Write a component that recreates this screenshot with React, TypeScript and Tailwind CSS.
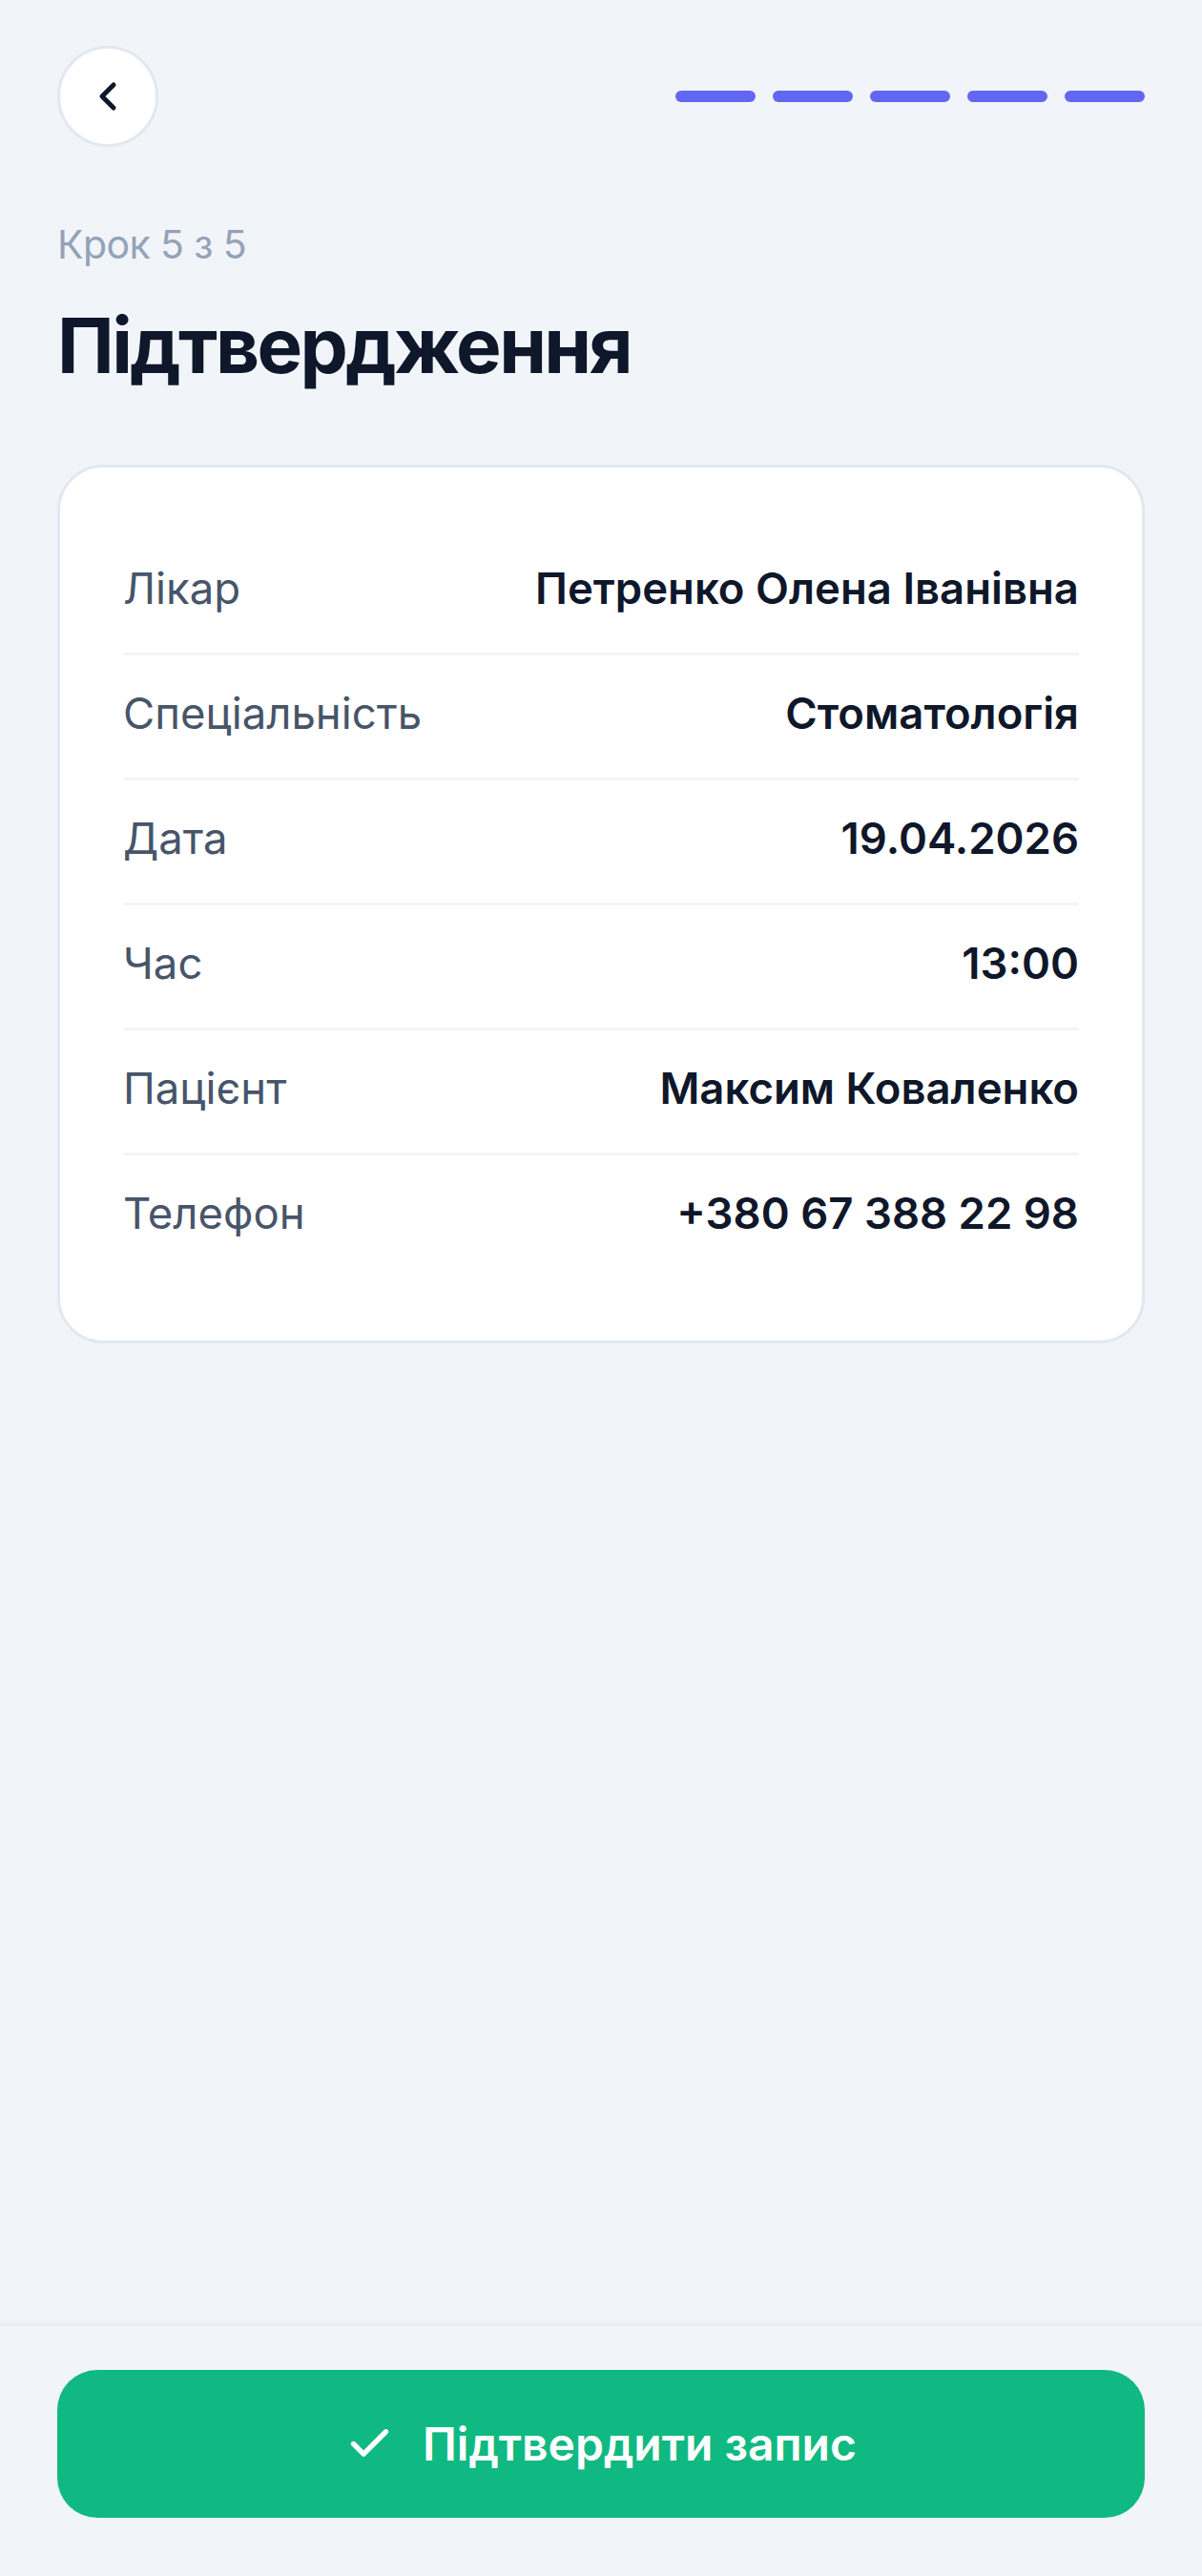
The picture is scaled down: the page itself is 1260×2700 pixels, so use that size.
import React from "react";

const rows: { label: string; value: string }[] = [
  { label: "Лікар", value: "Петренко Олена Іванівна" },
  { label: "Спеціальність", value: "Стоматологія" },
  { label: "Дата", value: "19.04.2026" },
  { label: "Час", value: "13:00" },
  { label: "Пацієнт", value: "Максим Коваленко" },
  { label: "Телефон", value: "+380 67 388 22 98" },
];

export default function App() {
  return (
    <div
      className="w-full h-[2700px] bg-[#f1f5f9] flex flex-col"
      style={{ fontFamily: "Inter, 'Noto Sans', sans-serif" }}
    >
      <main className="flex-1 px-[60px] pt-[48px]">
        <div className="flex items-center justify-between h-[106px]">
          <button className="w-[106px] h-[106px] rounded-full border-[3px] border-[#e2e8f0] bg-white flex items-center justify-center">
            <svg
              width="48"
              height="48"
              viewBox="0 0 24 24"
              fill="none"
              stroke="#0f172a"
              strokeWidth="2.5"
              strokeLinecap="round"
              strokeLinejoin="round"
            >
              <path d="m15 18-6-6 6-6" />
            </svg>
          </button>
          <div className="flex gap-[18px]">
            <div className="w-[84px] h-[12px] rounded-full bg-[#6366f1]" />
            <div className="w-[84px] h-[12px] rounded-full bg-[#6366f1]" />
            <div className="w-[84px] h-[12px] rounded-full bg-[#6366f1]" />
            <div className="w-[84px] h-[12px] rounded-full bg-[#6366f1]" />
            <div className="w-[84px] h-[12px] rounded-full bg-[#6366f1]" />
          </div>
        </div>

        <p className="mt-[71px] text-[41px] leading-[63px] tracking-[-0.6px] text-[#94a3b8]">Крок 5 з 5</p>
        <h1 className="mt-[26px] text-[80px] leading-[96px] font-bold text-[#0f172a] tracking-[-2.6px]">
          Підтвердження
        </h1>

        <div className="mt-[77px] bg-white border-[3px] border-[#e2e8f0] rounded-[48px] px-[66px] py-[66px]">
          {rows.map((r, i) => (
            <div
              key={r.label}
              className={
                i < rows.length - 1
                  ? "h-[131px] pb-[6px] flex items-center justify-between border-b-[3px] border-[#f1f5f9]"
                  : "h-[128px] pb-[6px] flex items-center justify-between"
              }
            >
              <span className="text-[45.5px] leading-[54px] text-[#475569]">{r.label}</span>
              <span className="text-[45.5px] leading-[54px] font-semibold text-[#0f172a]">{r.value}</span>
            </div>
          ))}
        </div>
      </main>

      <footer className="border-t-[3px] border-[#e9eef4] px-[60px] pt-[46px] pb-[61px]">
        <button className="w-full h-[155px] rounded-[42px] bg-[#10b981] flex items-center justify-center gap-[30px] text-white text-[48px] leading-[58px] font-semibold">
          <svg
            width="51"
            height="51"
            viewBox="0 0 24 24"
            fill="none"
            stroke="#ffffff"
            strokeWidth="2.5"
            strokeLinecap="round"
            strokeLinejoin="round"
          >
            <path d="M20 6 9 17l-5-5" />
          </svg>
          <span>Підтвердити запис</span>
        </button>
      </footer>
    </div>
  );
}
